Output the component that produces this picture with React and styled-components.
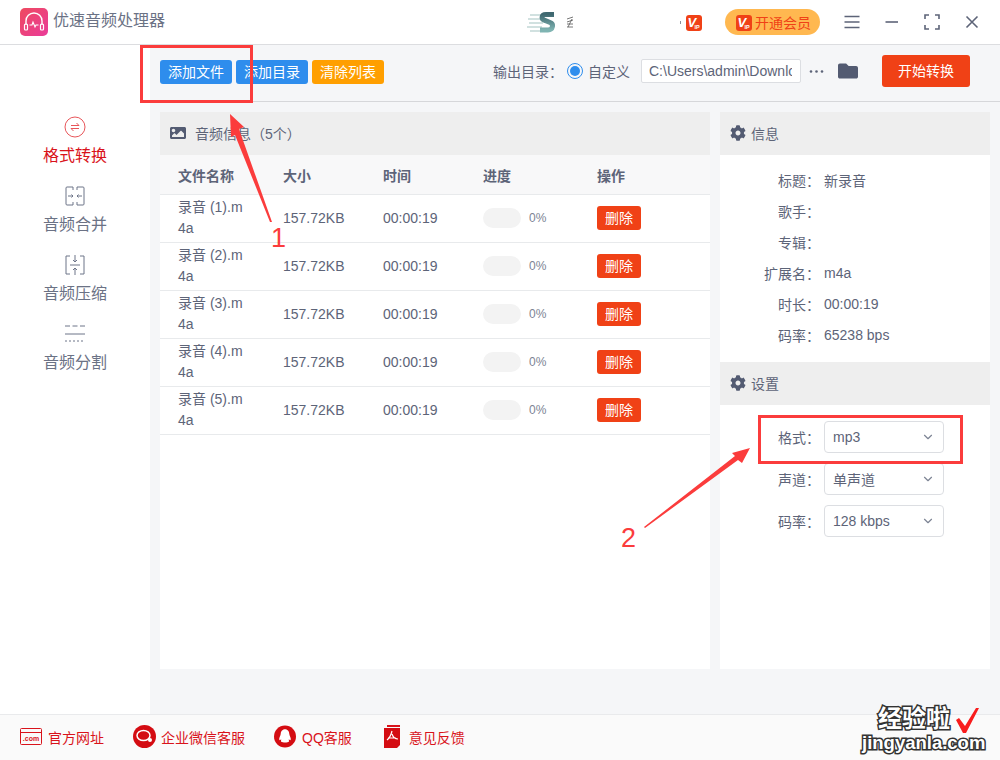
import styled, { createGlobalStyle } from 'styled-components'
import { FaCog, FaFolder, FaImage } from 'react-icons/fa'
import { FiChevronDown } from 'react-icons/fi'

const GlobalStyle = createGlobalStyle`
  html, body { margin: 0; padding: 0; }
  body {
    font-family: "Liberation Sans", "Noto Sans CJK SC", sans-serif;
    font-size: 14px;
    color: #5d6478;
    background: #fff;
  }
`

const files = [1, 2, 3, 4, 5]
const infoRows = [
  ['标题：', '新录音'],
  ['歌手：', ''],
  ['专辑：', ''],
  ['扩展名：', 'm4a'],
  ['时长：', '00:00:19'],
  ['码率：', '65238 bps'],
]
const settingRows = [
  ['格式：', 'mp3'],
  ['声道：', '单声道'],
  ['码率：', '128 kbps'],
]

function VipIcon() {
  return (
    <VipSvg viewBox="0 0 16 16">
      <rect width="16" height="16" rx="3" fill="#f04116" />
      <text x="1.500" y="11.500" fontSize="13" fontWeight="700" fontStyle="italic" fill="#fff">V</text>
      <text x="8.500" y="14" fontSize="5.500" fontWeight="700" fill="#fff">IP</text>
    </VipSvg>
  )
}

export default function App() {
  return (
    <Page>
      <GlobalStyle />
      <TitleBar>
        <Logo viewBox="0 0 28 28">
          <defs>
            <linearGradient id="logoFill" x1="0" y1="0" x2="1" y2="1">
              <stop offset="0" stopColor="#ee4a5f" />
              <stop offset="1" stopColor="#ea3c9a" />
            </linearGradient>
          </defs>
          <rect width="28" height="28" rx="5" fill="url(#logoFill)" />
          <path d="M6 17v-4a8 8 0 0 1 16 0v4" fill="none" stroke="#fff" strokeWidth="1.400" />
          <rect x="4.500" y="16" width="3" height="6" rx="1" fill="none" stroke="#fff" strokeWidth="1.200" />
          <rect x="20.500" y="16" width="3" height="6" rx="1" fill="none" stroke="#fff" strokeWidth="1.200" />
          <path d="M9.500 17h2.500l1-3 2 5 1-2h2.500" fill="none" stroke="#fff" strokeWidth="1.100" />
        </Logo>
        <AppName>优速音频处理器</AppName>
        <BrandMark viewBox="0 0 28 22">
          <defs>
            <linearGradient id="brandFill" x1="0" y1="0" x2="0" y2="1">
              <stop offset="0" stopColor="#3f6870" />
              <stop offset="1" stopColor="#7fb4b2" />
            </linearGradient>
          </defs>
          <path d="M3 4h12M1 8h12M2 12h14M0 16h15M3 20h12" stroke="#c2d8d6" strokeWidth="1.500" />
          <path d="M27 3.500H19c-5 0-5 5-1 6l5 2c4 1.500 3 7.500-2 7.500H13" fill="none" stroke="url(#brandFill)" strokeWidth="5" />
        </BrandMark>
        <BrandGlyph viewBox="0 0 8 12">
          <path d="M1 3l6-2M1 6l6-2M1 8h6M6 3L2 11M1 11h6" fill="none" stroke="#555" strokeWidth="0.800" />
        </BrandGlyph>
        <TinyMark />
        <VipIcon />
        <MemberPill>
          <VipIcon />
          开通会员
        </MemberPill>
        <WindowButtons>
          <WindowIcon viewBox="0 0 16 16">
            <path d="M0.500 2.500h15M0.500 8h15M0.500 13.500h15" />
          </WindowIcon>
          <WindowIcon viewBox="0 0 16 16">
            <path d="M1.500 8h12.500" />
          </WindowIcon>
          <WindowIcon viewBox="0 0 16 16">
            <path d="M1 5V1h4M11 1h4v4M15 11v4h-4M5 15H1v-4" />
          </WindowIcon>
          <WindowIcon viewBox="0 0 16 16">
            <path d="M2.500 2.500l11 11M13.500 2.500l-11 11" />
          </WindowIcon>
        </WindowButtons>
      </TitleBar>

      <Body>
        <Sidebar>
          <NavItem $active>
            <NavIcon viewBox="0 0 22 22" stroke="#e8565a">
              <circle cx="11" cy="11" r="10" />
              <path d="M7 9.500h8L12.500 7M15 12.500H7l2.500 2.500" />
            </NavIcon>
            格式转换
          </NavItem>
          <NavItem>
            <NavIcon viewBox="0 0 22 22" stroke="#6d7488">
              <path d="M9 2H3a1 1 0 0 0-1 1v16a1 1 0 0 0 1 1h6M13 2h6a1 1 0 0 1 1 1v16a1 1 0 0 1-1 1h-6M9 2v3M9 17v3M13 2v3M13 17v3" />
              <path d="M4 11h5L7.500 9.500M9 11l-1.500 1.500M18 11h-5l1.500-1.500M13 11l1.500 1.500" />
            </NavIcon>
            音频合并
          </NavItem>
          <NavItem>
            <NavIcon viewBox="0 0 22 22" stroke="#6d7488">
              <path d="M6 2H2v18h4M16 2h4v18h-4" />
              <path d="M6 11h10M11 1v7M9 6l2 2 2-2M11 21v-7M9 16l2-2 2 2" />
            </NavIcon>
            音频压缩
          </NavItem>
          <NavItem>
            <NavIcon viewBox="0 0 22 22" stroke="#6d7488">
              <path d="M1 3h5M8.500 3h5M16 3h5" />
              <path d="M1 11h20" />
              <path d="M1 18h20" strokeDasharray="2 2" />
            </NavIcon>
            音频分割
          </NavItem>
        </Sidebar>

        <Main>
          <Toolbar>
            <ActionButton>添加文件</ActionButton>
            <ActionButton>添加目录</ActionButton>
            <ActionButton $orange>清除列表</ActionButton>
            <OutputLabel>输出目录：</OutputLabel>
            <RadioDot />
            <RadioText>自定义</RadioText>
            <PathInput readOnly value="C:\Users\admin\Downloads" />
            <MoreDots viewBox="0 0 15 3">
              <circle cx="2" cy="1.500" r="1.300" />
              <circle cx="7.500" cy="1.500" r="1.300" />
              <circle cx="13" cy="1.500" r="1.300" />
            </MoreDots>
            <FaFolder size={20} color="#535b72" />
            <StartButton>开始转换</StartButton>
          </Toolbar>

          <Content>
            <ListPanel>
              <PanelHeader>
                <FaImage size={16} color="#535b72" />
                <ListTitle>音频信息（5个）</ListTitle>
              </PanelHeader>
              <ColumnHead>
                <div>文件名称</div>
                <div>大小</div>
                <div>时间</div>
                <ProgressCell>进度</ProgressCell>
                <div>操作</div>
              </ColumnHead>
              {files.map((n) => (
                <FileRow key={n}>
                  <NameCell>录音 ({n}).m<br />4a</NameCell>
                  <div>157.72KB</div>
                  <div>00:00:19</div>
                  <ProgressCell>
                    <ProgressTrack />
                    <Percent>0%</Percent>
                  </ProgressCell>
                  <DeleteButton>删除</DeleteButton>
                </FileRow>
              ))}
            </ListPanel>

            <SidePanel>
              <PanelHeader>
                <FaCog size={16} color="#535b72" />
                信息
              </PanelHeader>
              <InfoList>
                {infoRows.map(([label, value]) => (
                  <InfoRow key={label}>
                    <FieldLabel>{label}</FieldLabel>
                    <span>{value}</span>
                  </InfoRow>
                ))}
              </InfoList>
              <PanelHeader>
                <FaCog size={16} color="#535b72" />
                设置
              </PanelHeader>
              <SettingList>
                {settingRows.map(([label, value]) => (
                  <SettingRow key={label}>
                    <FieldLabel>{label}</FieldLabel>
                    <SelectBox>
                      {value}
                      <FiChevronDown size={14} color="#7d8494" />
                    </SelectBox>
                  </SettingRow>
                ))}
              </SettingList>
            </SidePanel>
          </Content>
        </Main>
      </Body>

      <Footer>
        <FooterLink $gap={6}>
          <svg width="22" height="18" viewBox="0 0 22 18" fill="none" stroke="#d9131b">
            <rect x="0.500" y="0.500" width="21" height="16" rx="1" />
            <path d="M1 4.500h20" />
            <text x="11" y="13" fontSize="7" fontWeight="700" fill="#d9131b" stroke="none" textAnchor="middle">.com</text>
          </svg>
          官方网址
        </FooterLink>
        <FooterLink $gap={5}>
          <svg width="23" height="23" viewBox="0 0 23 23">
            <circle cx="11.500" cy="11.500" r="11.500" fill="#d40c12" />
            <ellipse cx="10.500" cy="10.500" rx="6.500" ry="5" fill="none" stroke="#fff" strokeWidth="1.500" />
            <circle cx="17" cy="15" r="2" fill="#fff" />
          </svg>
          企业微信客服
        </FooterLink>
        <FooterLink $gap={6}>
          <svg width="22" height="23" viewBox="0 0 23 23">
            <circle cx="11.500" cy="11.500" r="11.500" fill="#d40c12" />
            <path d="M11.500 4c3 0 4.500 2.500 4.500 5 0 1.500 2 4 1.500 6-.5 1-1.500 0-2-.5-.2 1 .5 1.500 0 2.500-1 1-6.500 1-8 0-.5-1 .2-1.500 0-2.500-.5.500-1.500 1.500-2 .5-.5-2 1.500-4.500 1.500-6 0-2.500 1.500-5 4.500-5z" fill="#fff" />
          </svg>
          QQ客服
        </FooterLink>
        <FeedbackLink $gap={9}>
          <svg width="16" height="23" viewBox="0 0 16 23">
            <path d="M3 0h13v2H3z" fill="#d9131b" />
            <path d="M0 3h16v17l-3 3H0z" fill="#d40c12" />
            <path d="M8 6c-1 4-2 7-5 9M8 9c1 3 3 5 6 5M4 13h8" fill="none" stroke="#fff" strokeWidth="1.200" />
          </svg>
          意见反馈
        </FeedbackLink>
      </Footer>

      {/* annotations drawn over the screenshot */}
      <MarkRect $left={140} $top={45} $width={113} $height={58} />
      <MarkRect $left={758} $top={415} $width={205} $height={49} />
      <MarkLayer viewBox="0 0 1000 760">
        <polygon points="230,114 244,127 239,129 272,222 270,222 235,135 231,137" fill="#fb3c3c" />
        <polygon points="750,448 742,463 738,460 645,528 644,527 735,456 732,453" fill="#fb3c3c" />
      </MarkLayer>
      <MarkNumber $left={271} $top={220}>1</MarkNumber>
      <MarkNumber $left={621} $top={520}>2</MarkNumber>
      <Watermark>
        <WatermarkCn>经验啦</WatermarkCn>
        <WatermarkEn>jingyanla.com</WatermarkEn>
      </Watermark>
      <MarkLayer viewBox="0 0 1000 760">
        <polygon points="956,720 959,718 965,726 976,708 979,708 966,733 963,733" fill="#f81c1c" />
      </MarkLayer>
    </Page>
  )
}

const Page = styled.div`
  position: relative;
  width: 1000px;
  height: 760px;
  overflow: hidden;
  display: flex;
  flex-direction: column;
`

const TitleBar = styled.header`
  height: 44px;
  flex: none;
  display: flex;
  align-items: center;
  padding-left: 20px;
  background: #fff;
  border-bottom: 1px solid #dcdde0;
`

const Logo = styled.svg`
  width: 28px;
  height: 28px;
  margin-right: 5px;
`

const AppName = styled.div`
  font-size: 16px;
  line-height: 22px;
  padding-bottom: 2px;
  width: 474px;
  color: #6b7285;
`

const BrandMark = styled.svg`
  width: 28px;
  height: 22px;
  margin-right: 11px;
`

const BrandGlyph = styled.svg`
  width: 8px;
  height: 12px;
  margin-right: 106px;
`

const TinyMark = styled.div`
  width: 1px;
  height: 3px;
  margin-right: 5px;
  background: #8a8f9c;
`

const VipSvg = styled.svg`
  width: 16px;
  height: 16px;
  flex: none;
  margin-top: 2px;
`

const MemberPill = styled.div`
  width: 95px;
  height: 26px;
  box-sizing: border-box;
  margin-left: 23px;
  padding-left: 11px;
  display: flex;
  align-items: center;
  gap: 3px;
  border-radius: 13px;
  background: #ffb850;
  color: #f04116;
  white-space: nowrap;
`

const WindowButtons = styled.div`
  margin-left: 12px;
  display: grid;
  grid-template-columns: repeat(4, 40px);
  justify-items: center;
  align-items: center;
`

const WindowIcon = styled.svg`
  width: 16px;
  height: 16px;
  fill: none;
  stroke: #5d6478;
  stroke-width: 1.600;
`

const Body = styled.div`
  flex: 1;
  min-height: 0;
  display: flex;
`

const Sidebar = styled.nav`
  width: 150px;
  flex: none;
  box-sizing: border-box;
  padding-top: 71px;
  display: flex;
  flex-direction: column;
  align-items: center;
  gap: 17px;
  background: #fff;
`

const NavItem = styled.div`
  display: flex;
  flex-direction: column;
  align-items: center;
  gap: 6px;
  font-size: 16px;
  line-height: 24px;
  color: ${(p) => (p.$active ? '#d9131b' : '#6b7285')};
`

const NavIcon = styled.svg`
  width: 22px;
  height: 22px;
  fill: none;
  stroke-width: 1;
`

const Main = styled.main`
  flex: 1;
  min-width: 0;
  display: flex;
  flex-direction: column;
  background: #f5f6f8;
`

const Toolbar = styled.div`
  height: 57px;
  flex: none;
  box-sizing: border-box;
  padding: 0 0 4px 10px;
  display: flex;
  align-items: center;
  border-bottom: 1px solid #d6d7da;
`

const ActionButton = styled.div`
  width: 72px;
  height: 24px;
  margin: 2px 4px 0 0;
  border-radius: 3px;
  background: ${(p) => (p.$orange ? '#ff9f00' : '#2e8ded')};
  color: #fff;
  font-size: 14px;
  line-height: 24px;
  text-align: center;
`

const OutputLabel = styled.div`
  margin-left: 105px;
  width: 74px;
`

const RadioDot = styled.div`
  width: 16px;
  height: 16px;
  box-sizing: border-box;
  border: 1px solid #2e8ded;
  border-radius: 50%;
  padding: 2px;
  background: content-box #2e8ded;
`

const RadioText = styled.div`
  margin-left: 5px;
  width: 53px;
`

const PathInput = styled.input`
  width: 160px;
  height: 24px;
  box-sizing: border-box;
  padding: 0 8px 0 7px;
  border: 1px solid #dcdee2;
  border-radius: 2px;
  background: #fff;
  font: inherit;
  color: inherit;
  outline: none;
`

const MoreDots = styled.svg`
  width: 15px;
  height: 3px;
  margin: 0 14px 0 8px;
  fill: #5d6478;
`

const StartButton = styled.div`
  width: 88px;
  height: 32px;
  margin-left: 24px;
  border-radius: 3px;
  background: #f04116;
  color: #fff;
  line-height: 32px;
  text-align: center;
`

const Content = styled.div`
  flex: 1;
  min-height: 0;
  padding: 10px 10px 45px;
  display: flex;
  gap: 10px;
`

const ListPanel = styled.section`
  flex: 1;
  background: #fff;
`

const SidePanel = styled.aside`
  width: 270px;
  flex: none;
  background: #fff;
`

const PanelHeader = styled.div`
  height: 43px;
  box-sizing: border-box;
  padding: 0 0 2px 10px;
  display: flex;
  align-items: center;
  gap: 5px;
  background: #eeeeee;
`

const ListTitle = styled.span`
  margin-left: 4px;
`

const tableColumns = `
  display: grid;
  grid-template-columns: 105px 100px 100px 114px 1fr;
  padding-left: 18px;
  align-items: center;
  border-bottom: 1px solid #e8eaec;
`

const ColumnHead = styled.div`
  ${tableColumns}
  height: 40px;
  box-sizing: border-box;
  background: #f8f8f9;
  font-weight: 700;
`

const FileRow = styled.div`
  ${tableColumns}
  height: 48px;
  box-sizing: border-box;
  padding-bottom: 1px;
`

const NameCell = styled.div`
  line-height: 21px;
`

const ProgressCell = styled.div`
  display: flex;
  align-items: center;
  gap: 8px;
`

const ProgressTrack = styled.div`
  width: 38px;
  height: 20px;
  border-radius: 10px;
  background: #f3f3f3;
`

const Percent = styled.span`
  font-size: 12px;
  color: #7d8494;
`

const DeleteButton = styled.div`
  width: 44px;
  height: 24px;
  border-radius: 3px;
  background: #f04116;
  color: #fff;
  line-height: 24px;
  text-align: center;
`

const InfoList = styled.div`
  height: 207px;
  box-sizing: border-box;
  padding-top: 9px;
`

const InfoRow = styled.div`
  height: 31px;
  display: flex;
  align-items: center;
`

const FieldLabel = styled.div`
  width: 104px;
  flex: none;
  text-align: right;
  padding-right: 4px;
  box-sizing: border-box;
`

const SettingList = styled.div`
  padding-top: 16px;
  display: flex;
  flex-direction: column;
  gap: 10px;
`

const SettingRow = styled.div`
  display: flex;
  align-items: center;
`

const SelectBox = styled.div`
  width: 120px;
  height: 32px;
  box-sizing: border-box;
  padding: 0 8px;
  display: flex;
  align-items: center;
  justify-content: space-between;
  border: 1px solid #dcdee2;
  border-radius: 4px;
  background: #fff;
`

const Footer = styled.footer`
  height: 46px;
  flex: none;
  box-sizing: border-box;
  padding: 0 0 2px 20px;
  display: flex;
  align-items: center;
  gap: 29px;
  background: #fafafa;
  border-top: 1px solid #e9eaec;
`

const FooterLink = styled.div`
  display: flex;
  align-items: center;
  gap: ${(p) => p.$gap}px;
  color: #d9131b;
`

const FeedbackLink = styled(FooterLink)`
  margin-left: 3px;
`

const MarkRect = styled.div`
  position: absolute;
  left: ${(p) => p.$left}px;
  top: ${(p) => p.$top}px;
  width: ${(p) => p.$width}px;
  height: ${(p) => p.$height}px;
  box-sizing: border-box;
  border: 3px solid #fb3c3c;
`

const MarkLayer = styled.svg`
  position: absolute;
  left: 0;
  top: 0;
  width: 1000px;
  height: 760px;
  pointer-events: none;
`

const MarkNumber = styled.div`
  position: absolute;
  left: ${(p) => p.$left}px;
  top: ${(p) => p.$top}px;
  font-size: 27px;
  line-height: 36px;
  color: #fb3c3c;
`

const Watermark = styled.div`
  position: absolute;
  left: 862px;
  top: 706px;
  color: #fff;
  font-weight: 700;
  -webkit-text-stroke: 3px #333;
  paint-order: stroke fill;
  white-space: nowrap;
`

const WatermarkCn = styled.div`
  font-size: 24px;
  line-height: 26px;
  padding-left: 16px;
`

const WatermarkEn = styled.div`
  font-size: 18.500px;
  line-height: 22px;
`
